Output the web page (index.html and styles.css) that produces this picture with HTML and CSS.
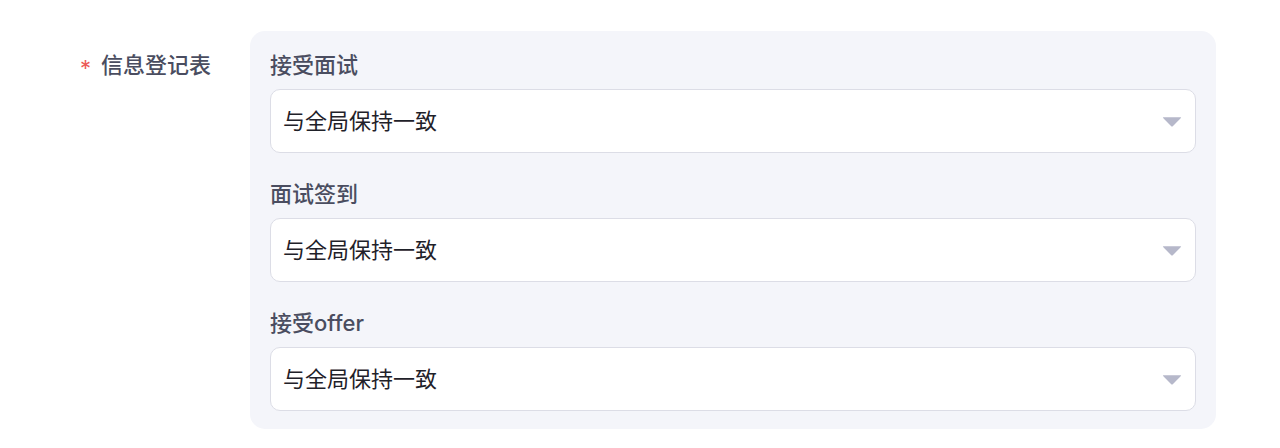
FILE: index.html
```html
<!DOCTYPE html>
<html lang="zh-CN">
<head>
<meta charset="utf-8">
<link rel="stylesheet" href="styles.css">
</head>
<body>
<div class="form-row">
  <div class="row-label"><span class="req">*</span>信息登记表</div>
  <div class="panel">
    <div class="field">
      <div class="field-label">接受面试</div>
      <div class="select"><span class="value">与全局保持一致</span><svg class="caret" width="20" height="11" viewBox="0 0 20 11"><path d="M1.5 1.2 H18.5 Q19.6 1.2 18.9 2.1 L11 10 Q10 11 9 10 L1.1 2.1 Q0.4 1.2 1.5 1.2 Z" fill="#b6b8ca"/></svg></div>
    </div>
    <div class="field">
      <div class="field-label">面试签到</div>
      <div class="select"><span class="value">与全局保持一致</span><svg class="caret" width="20" height="11" viewBox="0 0 20 11"><path d="M1.5 1.2 H18.5 Q19.6 1.2 18.9 2.1 L11 10 Q10 11 9 10 L1.1 2.1 Q0.4 1.2 1.5 1.2 Z" fill="#b6b8ca"/></svg></div>
    </div>
    <div class="field">
      <div class="field-label">接受offer</div>
      <div class="select"><span class="value">与全局保持一致</span><svg class="caret" width="20" height="11" viewBox="0 0 20 11"><path d="M1.5 1.2 H18.5 Q19.6 1.2 18.9 2.1 L11 10 Q10 11 9 10 L1.1 2.1 Q0.4 1.2 1.5 1.2 Z" fill="#b6b8ca"/></svg></div>
    </div>
  </div>
</div>
</body>
</html>
```
FILE: styles.css
```css
* { box-sizing: border-box; }
html, body { margin: 0; padding: 0; background: #ffffff; }
body {
  font-family: "Inter", "Noto Sans CJK SC", sans-serif;
  width: 1280px;
  height: 448px;
  overflow: hidden;
}
.form-row {
  display: flex;
  align-items: flex-start;
  padding-top: 31px;
}
.row-label {
  width: 250px;
  padding-right: 39px;
  display: flex;
  justify-content: flex-end;
  align-items: center;
  font-size: 22px;
  line-height: 26px;
  font-weight: 500;
  color: #4a4d60;
  padding-top: 21px;
}
.req {
  color: #ec5a58;
  font-size: 22px;
  font-weight: 400;
  margin-right: 10px;
  position: relative;
  top: 3px;
}
.panel {
  width: 966px;
  background: #f4f5fa;
  border-radius: 15px;
  padding: 21px 20px 18px 20px;
  display: flex;
  flex-direction: column;
  gap: 28px;
}
.field { display: flex; flex-direction: column; gap: 11px; }
.field-label {
  font-size: 22px;
  line-height: 26px;
  font-weight: 500;
  color: #4a4d60;
}
.select {
  height: 64px;
  background: #ffffff;
  border: 1px solid #dcdde6;
  border-radius: 10px;
  display: flex;
  align-items: center;
  justify-content: space-between;
  padding: 0 13px 4px 12px;
}
.value {
  font-size: 22px;
  color: #1f2129;
}
.caret { display: block; margin-top: 4px; }
```
